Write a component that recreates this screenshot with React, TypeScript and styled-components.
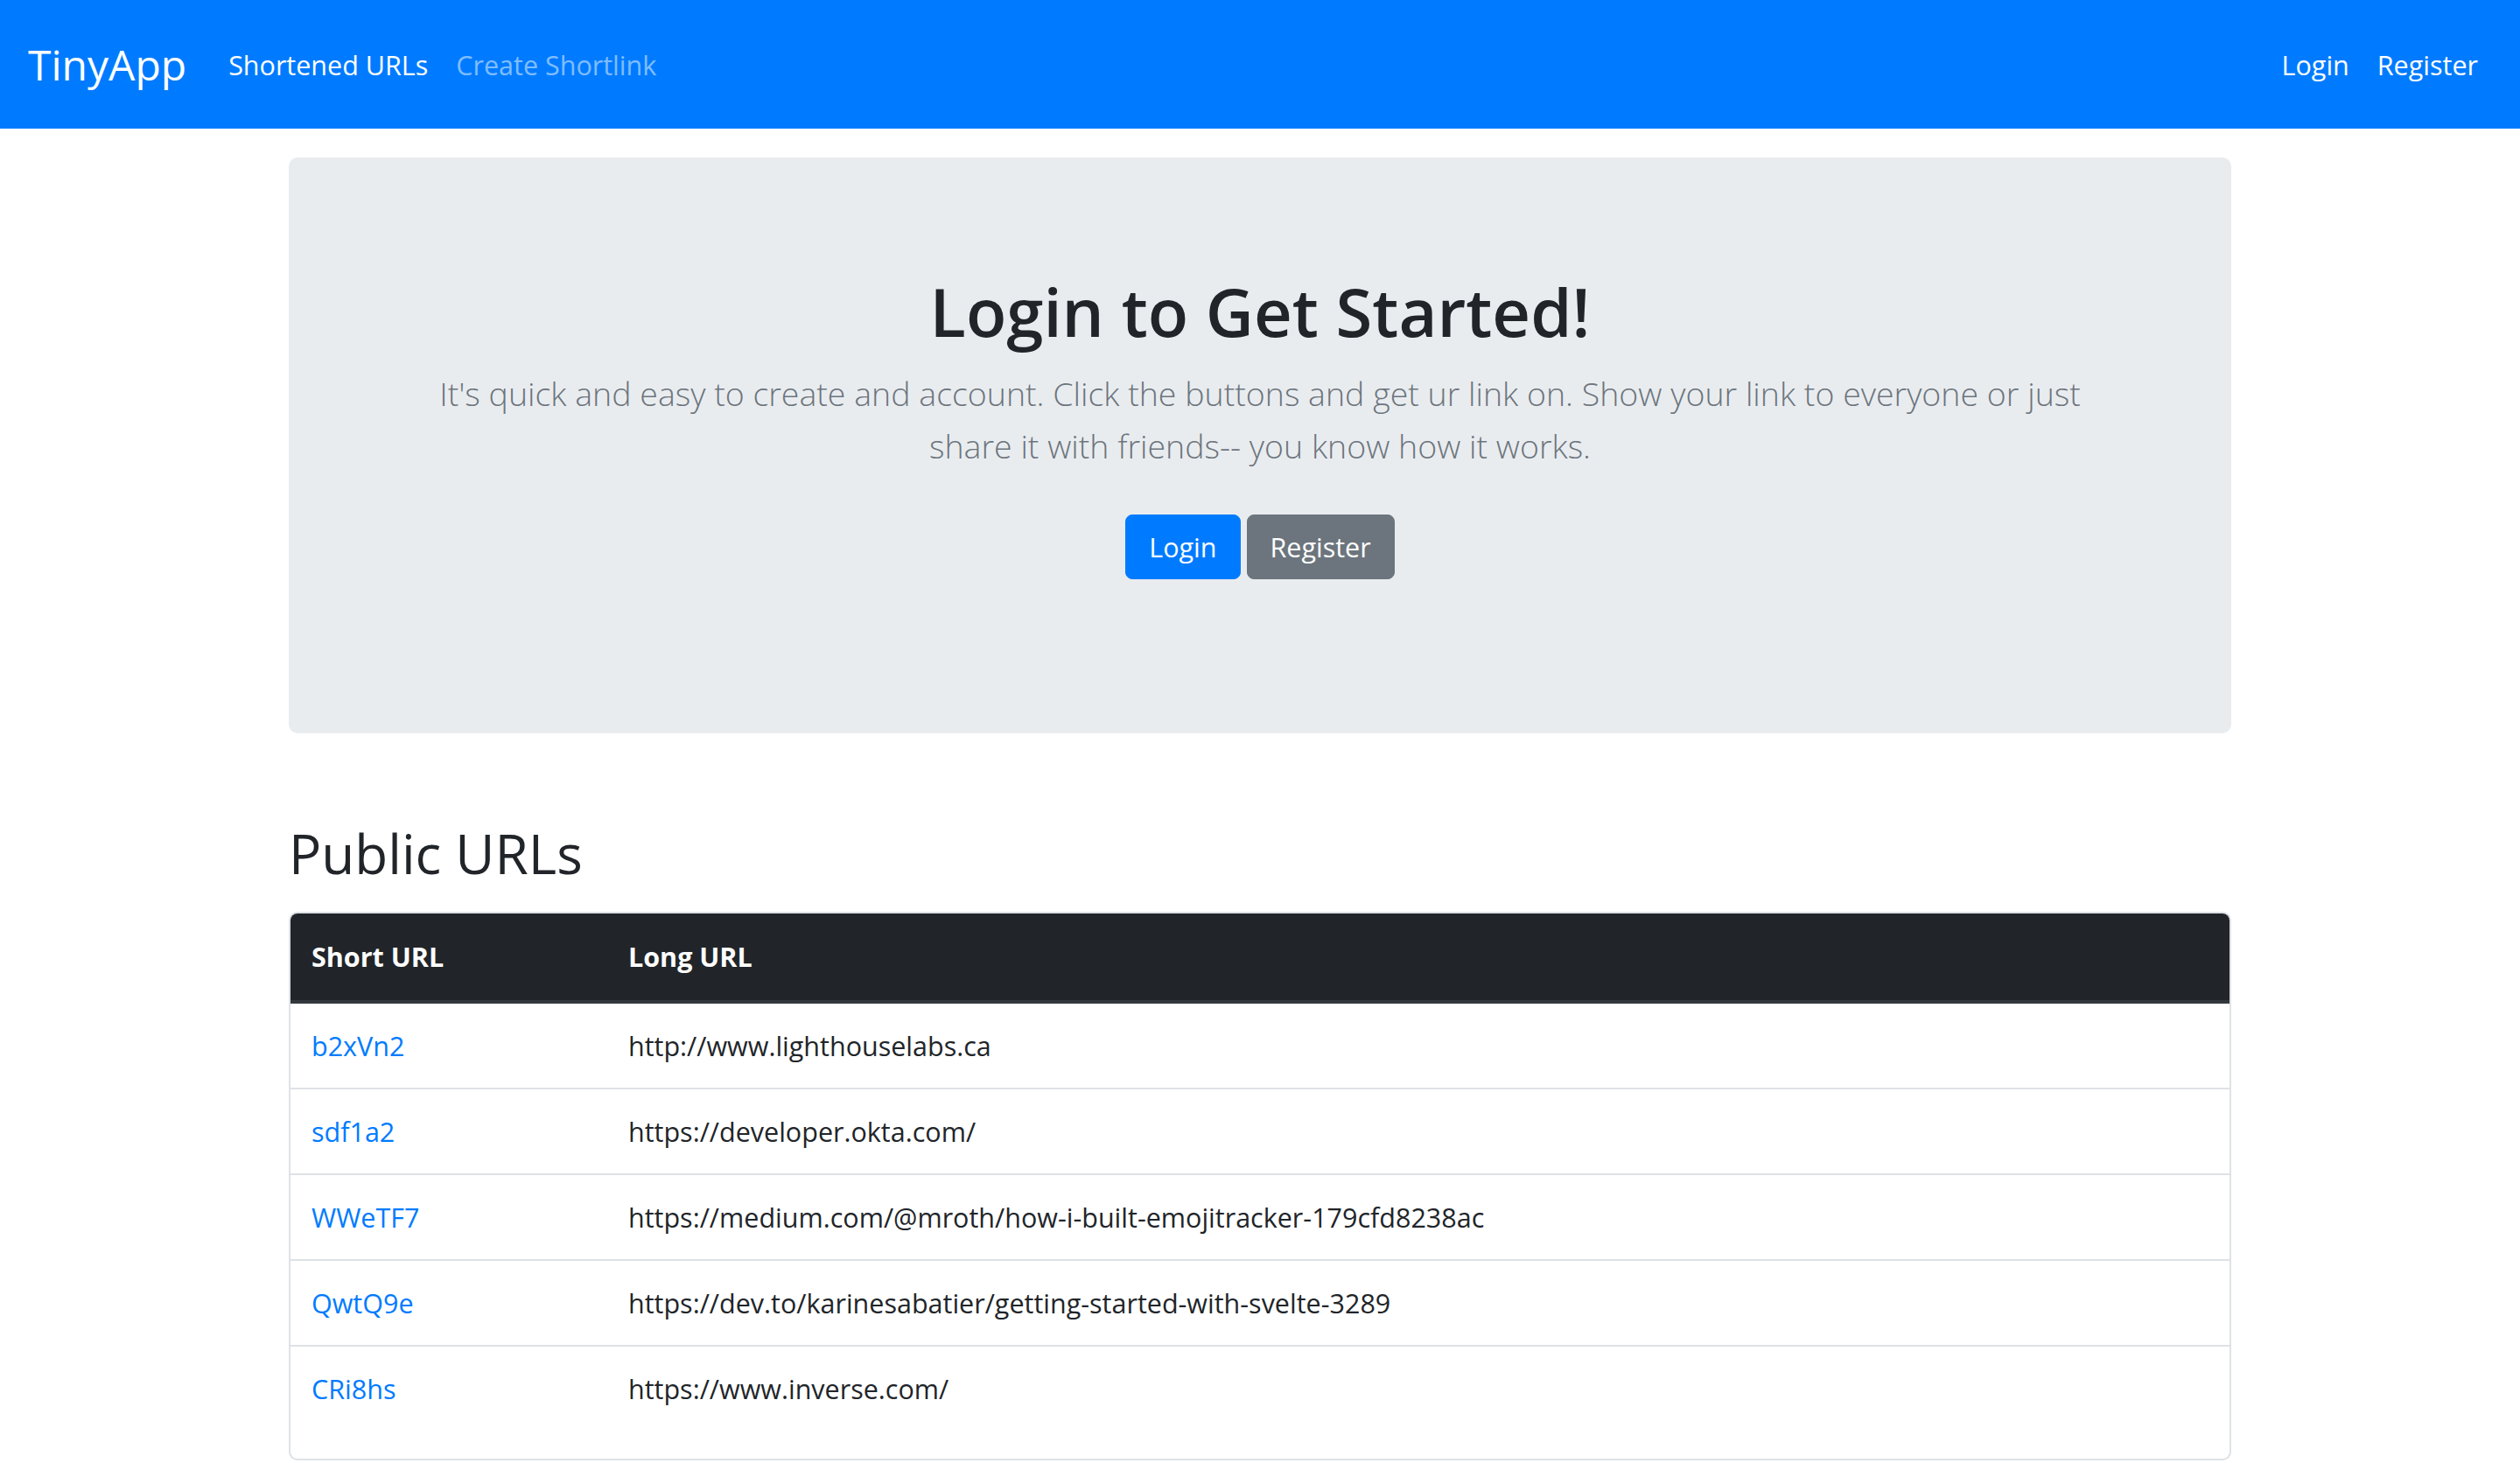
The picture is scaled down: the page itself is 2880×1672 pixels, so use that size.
import React from 'react';
import styled, { createGlobalStyle } from 'styled-components';

const GlobalStyle = createGlobalStyle`
  html, body {
    margin: 0;
    padding: 0;
    background: #fff;
  }
  body {
    font-family: "Open Sans", "Noto Sans", "Liberation Sans", sans-serif;
    font-size: 30.5px;
    line-height: 48px;
    color: #212529;
  }
  * {
    box-sizing: border-box;
  }
`;

const urls = [
  { short: 'b2xVn2', long: 'http://www.lighthouselabs.ca' },
  { short: 'sdf1a2', long: 'https://developer.okta.com/' },
  { short: 'WWeTF7', long: 'https://medium.com/@mroth/how-i-built-emojitracker-179cfd8238ac' },
  { short: 'QwtQ9e', long: 'https://dev.to/karinesabatier/getting-started-with-svelte-3289' },
  { short: 'CRi8hs', long: 'https://www.inverse.com/' },
];

const Navbar = styled.nav`
  display: flex;
  align-items: center;
  height: 147px;
  padding: 0 32px;
  background: #007bff;
`;

const Brand = styled.a`
  font-size: 48px;
  line-height: 60px;
  color: #fff;
  margin-right: 32px;
  text-decoration: none;
`;

const NavGroup = styled.div<{ $right?: boolean }>`
  display: flex;
  align-items: center;
  margin-left: ${(p) => (p.$right ? 'auto' : '0')};
`;

const NavLink = styled.a<{ $muted?: boolean }>`
  padding: 16px;
  font-size: 30.5px;
  line-height: 48px;
  color: ${(p) => (p.$muted ? 'rgba(255, 255, 255, 0.5)' : '#fff')};
  text-decoration: none;
`;

const Container = styled.main`
  width: 2220px;
  margin: 0 auto;
`;

const Jumbotron = styled.section`
  margin-top: 33px;
  padding: 128px 64px 176px;
  background: #e9ecef;
  border-radius: 10px;
  text-align: center;
`;

const Title = styled.h1`
  margin: 0 0 16px;
  font-size: 76px;
  line-height: 96px;
  font-weight: 600;
  color: #212529;
`;

const Lead = styled.p`
  max-width: 1900px;
  margin: 0 auto 48px;
  font-size: 37.5px;
  line-height: 60px;
  font-weight: 300;
  color: #6c757d;
`;

const Buttons = styled.div`
  display: flex;
  justify-content: center;
  gap: 7px;
`;

const Button = styled.a<{ $variant: 'primary' | 'secondary' }>`
  display: inline-block;
  padding: 12px 26px;
  font-size: 30.5px;
  line-height: 48px;
  color: #fff;
  text-decoration: none;
  border: 1.5px solid ${(p) => (p.$variant === 'primary' ? '#007bff' : '#6c757d')};
  background: ${(p) => (p.$variant === 'primary' ? '#007bff' : '#6c757d')};
  border-radius: 8px;
`;

const SectionTitle = styled.h2`
  margin: 99px 0 28px;
  font-size: 62px;
  line-height: 77px;
  font-weight: 500;
`;

const TableCard = styled.div`
  border: 2px solid #dee2e6;
  border-radius: 10px;
  overflow: hidden;
  padding-bottom: 32px;
`;

const Table = styled.table`
  width: 100%;
  border-collapse: collapse;
`;

const Th = styled.th<{ $first?: boolean }>`
  width: ${(p) => (p.$first ? '362px' : 'auto')};
  padding: 25px 24px 26px;
  text-align: left;
  font-weight: 700;
  color: #fff;
  background: #212529;
  border-bottom: 4px solid #32383e;
`;

const Td = styled.td`
  padding: 24px;
  border-top: 2px solid #dee2e6;
  vertical-align: top;
`;

const ShortLink = styled.a`
  color: #007bff;
  text-decoration: none;
`;

export default function App() {
  return (
    <>
      <GlobalStyle />
      <Navbar>
        <Brand href="#">TinyApp</Brand>
        <NavGroup>
          <NavLink href="#">Shortened URLs</NavLink>
          <NavLink href="#" $muted>Create Shortlink</NavLink>
        </NavGroup>
        <NavGroup $right>
          <NavLink href="#">Login</NavLink>
          <NavLink href="#">Register</NavLink>
        </NavGroup>
      </Navbar>
      <Container>
        <Jumbotron>
          <Title>Login to Get Started!</Title>
          <Lead>
            It's quick and easy to create and account. Click the buttons and get ur link on. Show your link to everyone or just share it with friends-- you know how it works.
          </Lead>
          <Buttons>
            <Button href="#" $variant="primary">Login</Button>
            <Button href="#" $variant="secondary">Register</Button>
          </Buttons>
        </Jumbotron>
        <SectionTitle>Public URLs</SectionTitle>
        <TableCard>
          <Table>
            <thead>
              <tr>
                <Th $first>Short URL</Th>
                <Th>Long URL</Th>
              </tr>
            </thead>
            <tbody>
              {urls.map((u) => (
                <tr key={u.short}>
                  <Td>
                    <ShortLink href="#">{u.short}</ShortLink>
                  </Td>
                  <Td>{u.long}</Td>
                </tr>
              ))}
            </tbody>
          </Table>
        </TableCard>
      </Container>
    </>
  );
}
